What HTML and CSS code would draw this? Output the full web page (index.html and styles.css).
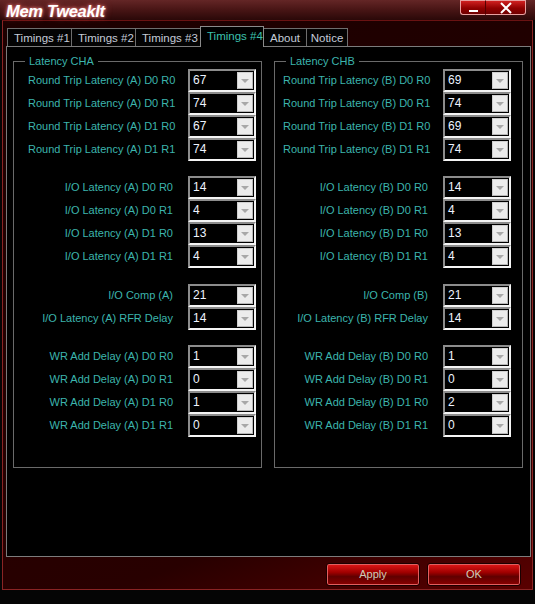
FILE: index.html
```html
<!DOCTYPE html>
<html>
<head>
<meta charset="utf-8">
<link rel="stylesheet" href="styles.css">
</head>
<body>
<div class="app">
  <div class="titlebar">
    <div class="title">Mem TweakIt</div>
    <div class="winbtns">
      <div class="wb wb-min"><span class="minbar"></span></div>
      <div class="wb wb-close">
        <svg width="14" height="12" viewBox="0 0 14 12"><path d="M2 1 L12 11 M12 1 L2 11" stroke="#fff" stroke-width="2"/></svg>
      </div>
    </div>
  </div>
  <div class="frame">
    <div class="tabs">
      <div class="tab">Timings #1</div>
      <div class="tab">Timings #2</div>
      <div class="tab">Timings #3</div>
      <div class="tab active">Timings #4</div>
      <div class="tab">About</div>
      <div class="tab">Notice</div>
    </div>
    <div class="panel">
      <div class="group group-a">
        <span class="legend">Latency CHA</span>
        <div class="sec">
          <div class="lbl left">Round Trip Latency (A) D0 R0</div><div class="combo"><span class="val">67</span><span class="arr"></span></div>
          <div class="lbl left">Round Trip Latency (A) D0 R1</div><div class="combo"><span class="val">74</span><span class="arr"></span></div>
          <div class="lbl left">Round Trip Latency (A) D1 R0</div><div class="combo"><span class="val">67</span><span class="arr"></span></div>
          <div class="lbl left">Round Trip Latency (A) D1 R1</div><div class="combo"><span class="val">74</span><span class="arr"></span></div>
        </div>
        <div class="sec s2">
          <div class="lbl">I/O Latency (A) D0 R0</div><div class="combo"><span class="val">14</span><span class="arr"></span></div>
          <div class="lbl">I/O Latency (A) D0 R1</div><div class="combo"><span class="val">4</span><span class="arr"></span></div>
          <div class="lbl">I/O Latency (A) D1 R0</div><div class="combo"><span class="val">13</span><span class="arr"></span></div>
          <div class="lbl">I/O Latency (A) D1 R1</div><div class="combo"><span class="val">4</span><span class="arr"></span></div>
        </div>
        <div class="sec s3">
          <div class="lbl">I/O Comp (A)</div><div class="combo"><span class="val">21</span><span class="arr"></span></div>
          <div class="lbl">I/O Latency (A) RFR Delay</div><div class="combo"><span class="val">14</span><span class="arr"></span></div>
        </div>
        <div class="sec s4">
          <div class="lbl">WR Add Delay (A) D0 R0</div><div class="combo"><span class="val">1</span><span class="arr"></span></div>
          <div class="lbl">WR Add Delay (A) D0 R1</div><div class="combo"><span class="val">0</span><span class="arr"></span></div>
          <div class="lbl">WR Add Delay (A) D1 R0</div><div class="combo"><span class="val">1</span><span class="arr"></span></div>
          <div class="lbl">WR Add Delay (A) D1 R1</div><div class="combo"><span class="val">0</span><span class="arr"></span></div>
        </div>
      </div>
      <div class="group group-b">
        <span class="legend">Latency CHB</span>
        <div class="sec">
          <div class="lbl left">Round Trip Latency (B) D0 R0</div><div class="combo"><span class="val">69</span><span class="arr"></span></div>
          <div class="lbl left">Round Trip Latency (B) D0 R1</div><div class="combo"><span class="val">74</span><span class="arr"></span></div>
          <div class="lbl left">Round Trip Latency (B) D1 R0</div><div class="combo"><span class="val">69</span><span class="arr"></span></div>
          <div class="lbl left">Round Trip Latency (B) D1 R1</div><div class="combo"><span class="val">74</span><span class="arr"></span></div>
        </div>
        <div class="sec s2">
          <div class="lbl">I/O Latency (B) D0 R0</div><div class="combo"><span class="val">14</span><span class="arr"></span></div>
          <div class="lbl">I/O Latency (B) D0 R1</div><div class="combo"><span class="val">4</span><span class="arr"></span></div>
          <div class="lbl">I/O Latency (B) D1 R0</div><div class="combo"><span class="val">13</span><span class="arr"></span></div>
          <div class="lbl">I/O Latency (B) D1 R1</div><div class="combo"><span class="val">4</span><span class="arr"></span></div>
        </div>
        <div class="sec s3">
          <div class="lbl">I/O Comp (B)</div><div class="combo"><span class="val">21</span><span class="arr"></span></div>
          <div class="lbl">I/O Latency (B) RFR Delay</div><div class="combo"><span class="val">14</span><span class="arr"></span></div>
        </div>
        <div class="sec s4">
          <div class="lbl">WR Add Delay (B) D0 R0</div><div class="combo"><span class="val">1</span><span class="arr"></span></div>
          <div class="lbl">WR Add Delay (B) D0 R1</div><div class="combo"><span class="val">0</span><span class="arr"></span></div>
          <div class="lbl">WR Add Delay (B) D1 R0</div><div class="combo"><span class="val">2</span><span class="arr"></span></div>
          <div class="lbl">WR Add Delay (B) D1 R1</div><div class="combo"><span class="val">0</span><span class="arr"></span></div>
        </div>
      </div>
    </div>
    <div class="footer">
      <div class="btn">Apply</div>
      <div class="btn">OK</div>
    </div>
  </div>
</div>
</body>
</html>
```
FILE: styles.css
```css
* { box-sizing: border-box; }
html, body { margin: 0; padding: 0; }
body {
  width: 535px;
  height: 604px;
  background: #050505;
  font-family: "Liberation Sans", Arial, sans-serif;
  font-size: 11px;
  overflow: hidden;
}
.app { width: 535px; height: 604px; }

.titlebar {
  height: 20px;
  display: flex;
  justify-content: space-between;
  background: linear-gradient(#642626 0%, #4a1616 45%, #2a0808 100%);
}
.title {
  padding-left: 6px;
  font-weight: bold;
  font-style: italic;
  font-size: 16.5px;
  line-height: 22px;
  color: #fff;
  letter-spacing: -0.3px;
  text-shadow: 0 0 3px #ff9a9a, 0 0 7px #d05050;
}
.winbtns {
  display: flex;
  margin-right: 9px;
  height: 15px;
}
.wb {
  height: 15px;
  background: linear-gradient(#d02020, #900000 55%, #700000);
  border: 1px solid #e8a0a0;
  display: flex;
  align-items: center;
  justify-content: center;
}
.wb-min { width: 26px; border-radius: 0 0 0 3px; border-right: 1px solid #500; align-items: flex-end; padding-bottom: 2px; }
.minbar { display: block; width: 9px; height: 2px; background: #fff; }
.wb-close { width: 40px; border-left: none; border-radius: 0 0 3px 0; }

.frame {
  margin: 0 2px 0 2px;
  height: 570px;
  border: 1px solid #8a2424;
  border-top-color: #6a1212;
  background: linear-gradient(160deg, #1c0000 0%, #280000 80%, #5a0000 100%);
  padding: 5px 1px 0 3px;
  display: flex;
  flex-direction: column;
}

.tabs {
  display: flex;
  align-items: flex-end;
  height: 20px;
  padding-left: 1px;
  position: relative;
  z-index: 1;
}
.tab {
  height: 18px;
  padding: 0 6px;
  border: 1px solid #6e6e6e;
  border-bottom: none;
  border-right: none;
  background: #030303;
  color: #c4cbd8;
  font-size: 11.5px;
  line-height: 18px;
  white-space: nowrap;
  text-align: center;
}
.tab:nth-child(1) { width: 64px; }
.tab:nth-child(2) { width: 64px; }
.tab:nth-child(3) { width: 65px; }
.tab:nth-child(4) { width: 64px; }
.tab:nth-child(5) { width: 42px; padding: 0 3px; }
.tab:nth-child(6) { width: 42px; padding: 0 3px; border-right: 1px solid #6e6e6e; }
.tab.active {
  height: 21px;
  border: 1px solid #8a8a8a;
  border-bottom: none;
  color: #3cc0ae;
  line-height: 19px;
  margin-bottom: -1px;
  background: #000;
}
.tab.active + .tab { border-left: none; }

.panel {
  height: 511px;
  border: 1px solid #7c7c7c;
  background: #000;
  display: flex;
  gap: 12px;
  padding: 14px 6px 0 6px;
}

.group {
  position: relative;
  width: 249px;
  height: 407px;
  border: 1px solid #6a6a6a;
  padding-top: 7px;
}
.group-a { padding-left: 14px; padding-right: 5px; }
.group-b { padding-left: 8px; padding-right: 11px; }
.legend {
  position: absolute;
  top: -8px;
  left: 11px;
  padding: 0 4px;
  background: #000;
  color: #3cb5ad;
  font-size: 11px;
  line-height: 14px;
}

.sec {
  display: grid;
  grid-template-columns: minmax(0, 1fr) 68px;
  grid-auto-rows: 23px;
  column-gap: 15px;
}
.s2 { margin-top: 15px; }
.s3 { margin-top: 16px; }
.s4 { margin-top: 15px; }

.lbl {
  color: #3cb5ad;
  font-size: 11px;
  line-height: 23px;
  white-space: nowrap;
  text-align: right;
  justify-self: end;
}
.lbl.left { justify-self: start; text-align: left; }

.combo {
  height: 23px;
  border: 2px solid;
  border-color: #8c8c8c #f4f4f4 #f4f4f4 #8c8c8c;
  background: #000;
  display: flex;
  justify-content: space-between;
  padding: 1px 1px 1px 0;
}
.val {
  color: #eef4ff;
  font-size: 12px;
  line-height: 14px;
  padding-left: 3px;
  padding-top: 1px;
}
.arr {
  width: 16px;
  height: 17px;
  background: #ececec;
  border: 1px solid #d0d0d0;
  border-right-color: #b8b8b8;
  border-bottom-color: #b8b8b8;
  position: relative;
}
.arr::after {
  content: "";
  position: absolute;
  left: 3px;
  top: 6px;
  border-left: 4px solid transparent;
  border-right: 4px solid transparent;
  border-top: 4px solid #a8a8a8;
}

.footer {
  flex: 1;
  display: flex;
  justify-content: flex-end;
  gap: 7px;
  padding: 6px 10px 0 0;
}
.btn {
  width: 94px;
  height: 23px;
  border: 1px solid #1a0000;
  border-radius: 3px;
  box-shadow: inset 0 0 0 1px #e06060;
  background: linear-gradient(#e01818 0%, #a00000 40%, #600000 60%, #8a0000 100%);
  color: #cfcdb8;
  font-size: 11px;
  line-height: 21px;
  text-align: center;
}
```
